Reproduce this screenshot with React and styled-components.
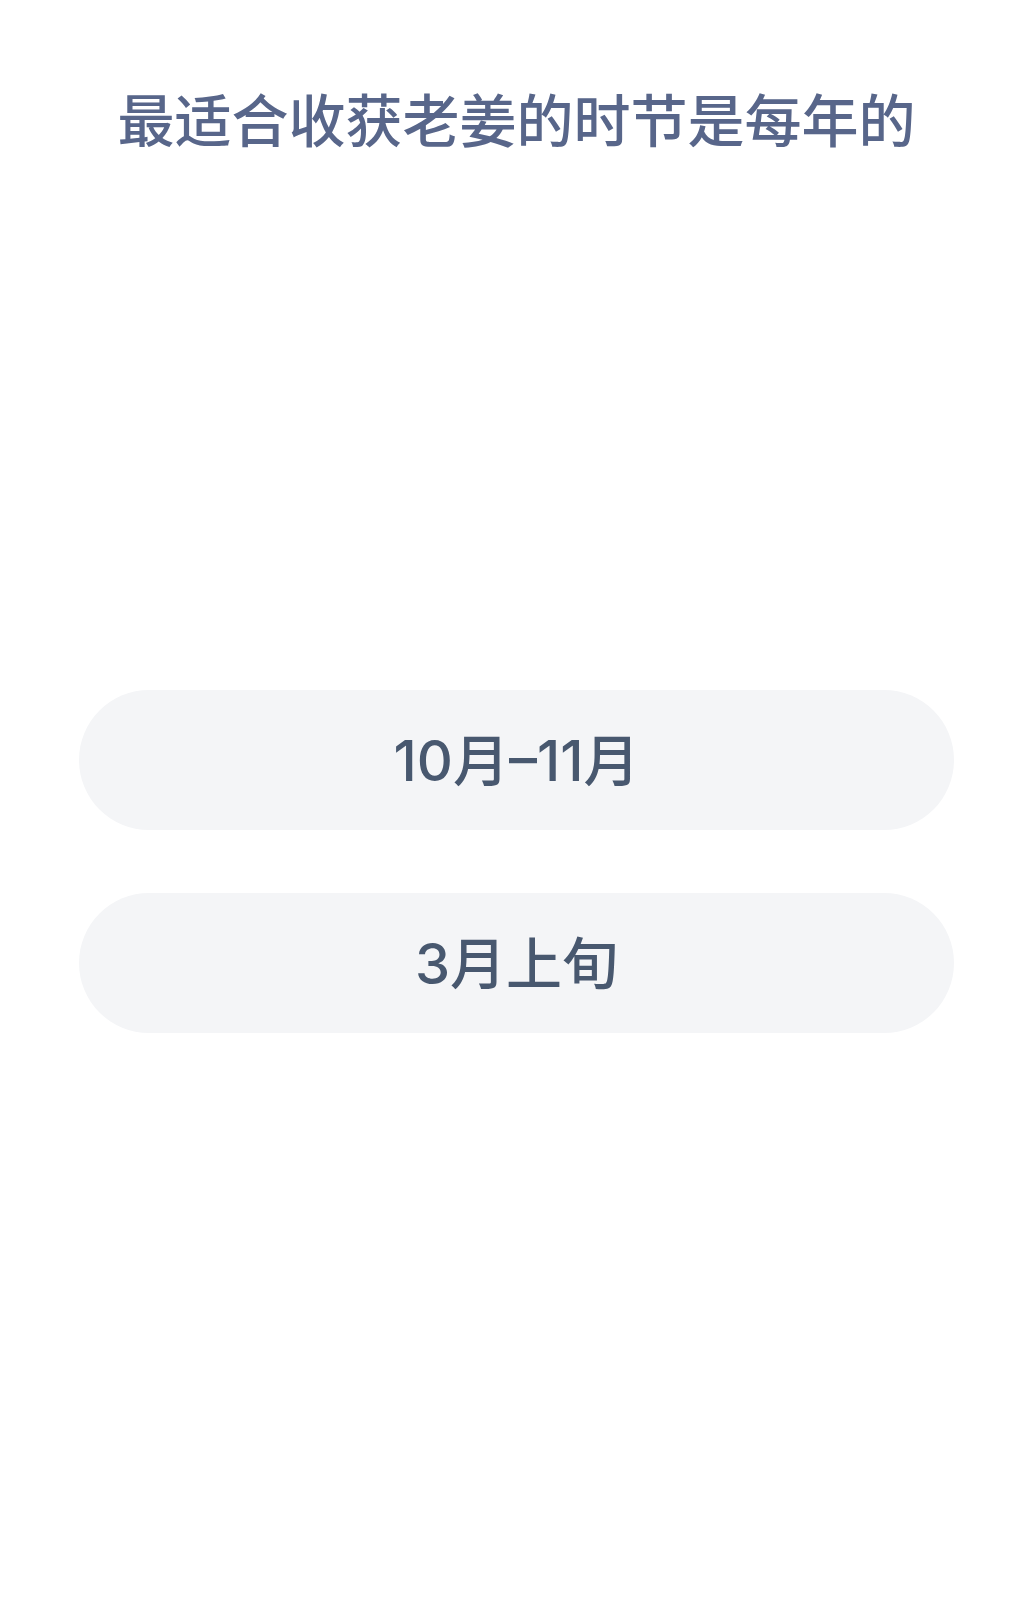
import React from 'react';
import styled, { createGlobalStyle } from 'styled-components';

const GlobalStyle = createGlobalStyle`
  html, body {
    margin: 0;
    padding: 0;
    background: #ffffff;
  }
  body {
    font-family: "Inter", "Noto Sans CJK SC", "Noto Sans", sans-serif;
  }
`;

const Page = styled.div`
  min-height: 1611px;
  box-sizing: border-box;
  padding: 84px 79px 0;
  display: flex;
  flex-direction: column;
  align-items: stretch;
`;

const Question = styled.h1`
  margin: 0;
  font-size: 57px;
  line-height: 76px;
  font-weight: 500;
  color: #58668a;
  text-align: center;
  white-space: nowrap;
`;

const Options = styled.div`
  margin-top: 530px;
  display: flex;
  flex-direction: column;
  gap: 63px;
`;

const Option = styled.button`
  height: 140px;
  border: none;
  border-radius: 70px;
  background: #f4f5f7;
  color: #48586f;
  font-family: inherit;
  font-size: 56px;
  font-weight: 500;
  display: flex;
  align-items: center;
  justify-content: center;
  padding: 0 0 8px;
  cursor: pointer;
`;

const answers = ['10月–11月', '3月上旬'];

export default function App() {
  return (
    <>
      <GlobalStyle />
      <Page>
        <Question>最适合收获老姜的时节是每年的</Question>
        <Options>
          {answers.map(a => (
            <Option key={a}>{a}</Option>
          ))}
        </Options>
      </Page>
    </>
  );
}
